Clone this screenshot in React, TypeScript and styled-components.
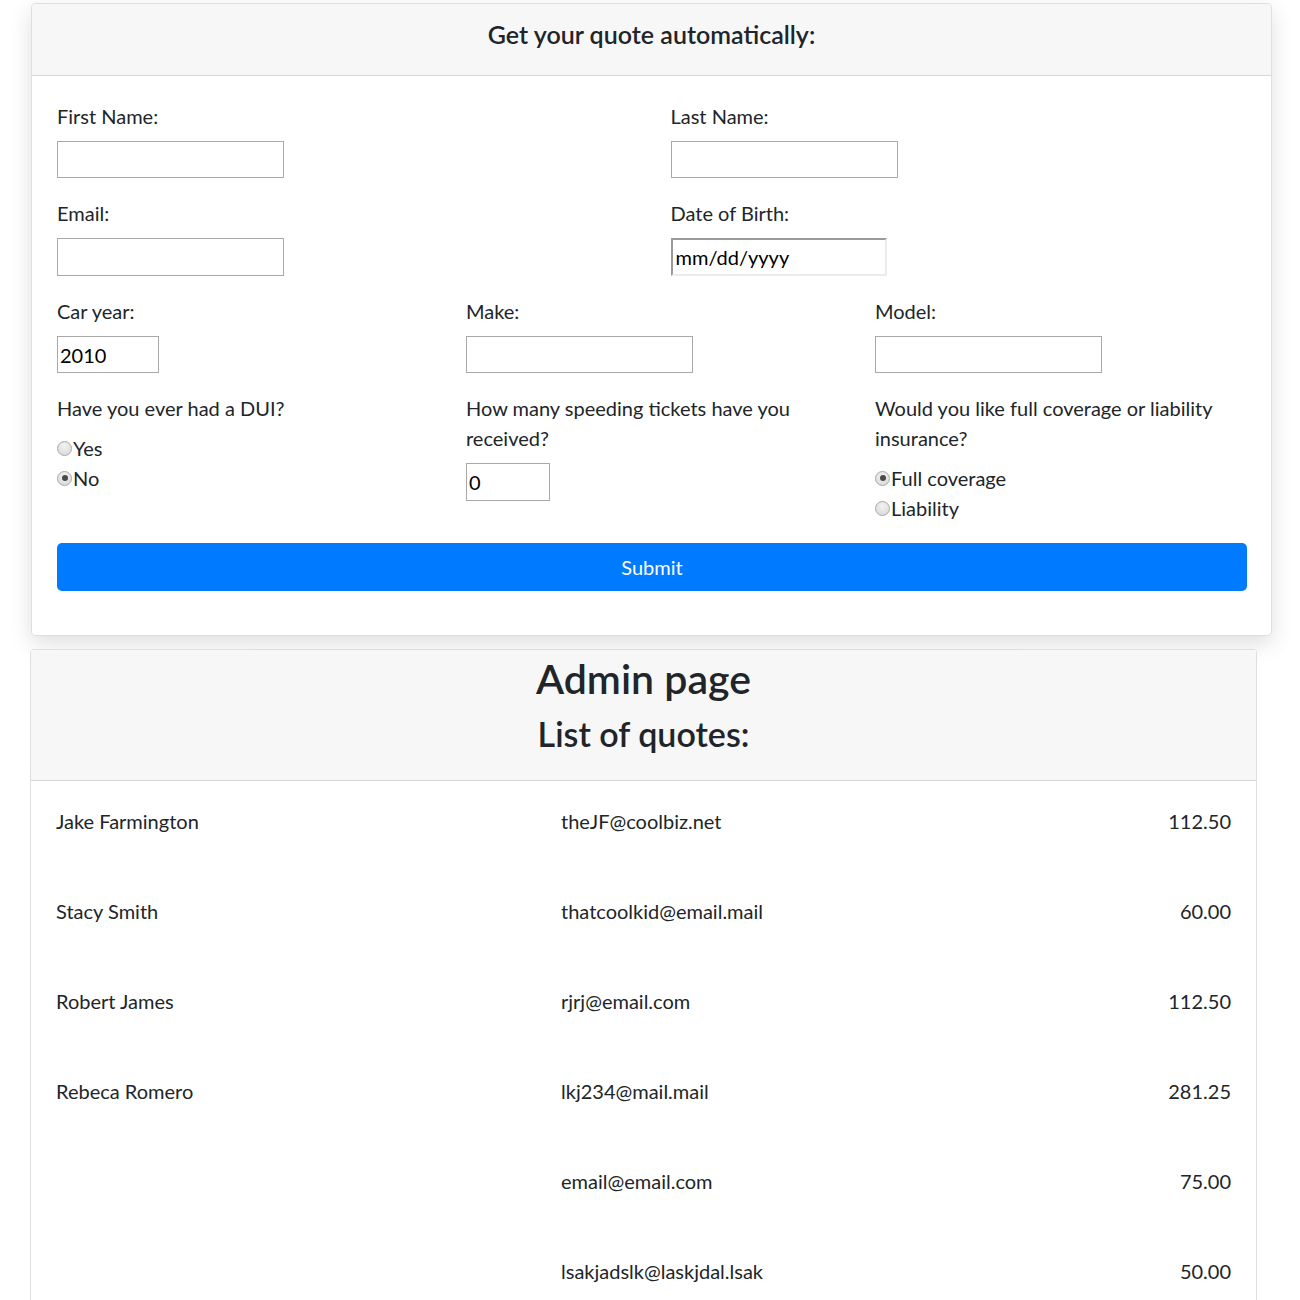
import React from "react";
import styled, { createGlobalStyle } from "styled-components";

const Global = createGlobalStyle`
  html, body { margin: 0; padding: 0; background: #ffffff; }
  body {
    font-family: "Lato", "Open Sans", sans-serif;
    color: #212529;
    font-size: 20px;
    line-height: 30px;
  }
  * { box-sizing: border-box; }
`;

const Page = styled.div`
  padding: 3px 0 0 30px;
  width: 1300px;
`;

const QuoteCard = styled.section`
  margin-left: 1px;
  width: 1241px;
  background: #fff;
  border: 1px solid rgba(0, 0, 0, 0.125);
  border-radius: 5px;
  box-shadow: 0 8px 22px rgba(0, 0, 0, 0.13);
  overflow: hidden;
`;

const QuoteHeader = styled.header`
  background: #f7f7f7;
  border-bottom: 1px solid rgba(0, 0, 0, 0.125);
  padding: 15px 0 26px;
  text-align: center;
  font-size: 25px;
  line-height: 30px;
  font-weight: 600;
  color: #212529;
`;

const QuoteBody = styled.form`
  padding: 25px 2px 44px 10px;
`;

const Row = styled.div<{ $cols: number }>`
  display: grid;
  grid-template-columns: repeat(${(p) => p.$cols}, 1fr);
`;

const Field = styled.div`
  padding: 0 15px;
  margin-bottom: 20px;
`;

const Label = styled.label`
  display: block;
  font-size: 20px;
  line-height: 30px;
  margin-bottom: 10px;
  color: #212529;
`;

const TextInput = styled.input<{ $w: number; $h?: number }>`
  display: block;
  width: ${(p) => p.$w}px;
  height: ${(p) => p.$h ?? 37}px;
  border: 1px solid #a9a9a9;
  border-radius: 0;
  padding: 0 2px;
  margin: 0;
  font-family: "Lato", "Open Sans", sans-serif;
  font-size: 20px;
  color: #000;
  background: #fff;
  outline: none;
`;

const DateInput = styled.input`
  display: block;
  width: 216px;
  height: 38px;
  border-style: solid;
  border-width: 2px;
  border-color: #9a9a9a #ececec #ececec #9a9a9a;
  border-radius: 0;
  padding: 0 3px;
  margin: 0;
  font-family: "Lato", "Open Sans", sans-serif;
  font-size: 20px;
  color: #000;
  background: #fff;
  outline: none;
`;

const RadioLine = styled.label`
  display: flex;
  align-items: center;
  height: 30px;
  font-size: 20px;
  color: #212529;
  cursor: pointer;
`;

const Radio = styled.input`
  appearance: none;
  -webkit-appearance: none;
  width: 15px;
  height: 15px;
  margin: 0 1px 0 0;
  border-radius: 50%;
  border: 1px solid #a8a8a8;
  background: radial-gradient(circle at 50% 30%, #f2f2f2 0%, #d6d6d6 100%);
  position: relative;
  flex: none;
  &:checked::after {
    content: "";
    position: absolute;
    left: 3.5px;
    top: 3.5px;
    width: 6px;
    height: 6px;
    border-radius: 50%;
    background: #4a4a4a;
  }
`;

const SubmitButton = styled.button`
  display: block;
  width: calc(100% - 37px);
  margin: 0 22px 0 15px;
  height: 48px;
  border: none;
  border-radius: 5px;
  background: #007bff;
  color: #fff;
  font-family: "Lato", "Open Sans", sans-serif;
  font-size: 20px;
  cursor: pointer;
`;

const AdminCard = styled.section`
  margin-top: 13px;
  width: 1227px;
  background: #fff;
  border: 1px solid rgba(0, 0, 0, 0.125);
  border-radius: 4px 4px 0 0;
  border-bottom: none;
`;

const AdminHeader = styled.header`
  background: #f7f7f7;
  border-bottom: 1px solid rgba(0, 0, 0, 0.125);
  padding: 5px 0 27px;
  text-align: center;
`;

const Title = styled.h1`
  margin: 0 0 12px;
  font-size: 41px;
  line-height: 48px;
  font-weight: 600;
  color: #212529;
`;

const Subtitle = styled.h2`
  margin: 0;
  font-size: 34px;
  line-height: 38px;
  font-weight: 600;
  color: #212529;
`;

const AdminBody = styled.div`
  padding: 25px 25px 30px;
`;

const QuoteRow = styled.div`
  display: grid;
  grid-template-columns: 505px 1fr auto;
  font-size: 20px;
  line-height: 30px;
  margin-bottom: 60px;
  color: #212529;
`;

const Amount = styled.span`
  text-align: right;
`;

const quotes = [
  { name: "Jake Farmington", email: "theJF@coolbiz.net", price: "112.50" },
  { name: "Stacy Smith", email: "thatcoolkid@email.mail", price: "60.00" },
  { name: "Robert James", email: "rjrj@email.com", price: "112.50" },
  { name: "Rebeca Romero", email: "lkj234@mail.mail", price: "281.25" },
  { name: "", email: "email@email.com", price: "75.00" },
  { name: "", email: "lsakjadslk@laskjdal.lsak", price: "50.00" },
];

export default function App() {
  return (
    <>
      <Global />
      <Page>
        <QuoteCard>
          <QuoteHeader>Get your quote automatically:</QuoteHeader>
          <QuoteBody onSubmit={(e) => e.preventDefault()}>
            <Row $cols={2}>
              <Field>
                <Label>First Name:</Label>
                <TextInput $w={227} type="text" />
              </Field>
              <Field>
                <Label>Last Name:</Label>
                <TextInput $w={227} type="text" />
              </Field>
            </Row>
            <Row $cols={2}>
              <Field>
                <Label>Email:</Label>
                <TextInput $w={227} $h={38} type="text" />
              </Field>
              <Field>
                <Label>Date of Birth:</Label>
                <DateInput type="text" defaultValue="mm/dd/yyyy" />
              </Field>
            </Row>
            <Row $cols={3}>
              <Field>
                <Label>Car year:</Label>
                <TextInput $w={102} type="text" defaultValue="2010" />
              </Field>
              <Field>
                <Label>Make:</Label>
                <TextInput $w={227} type="text" />
              </Field>
              <Field>
                <Label>Model:</Label>
                <TextInput $w={227} type="text" />
              </Field>
            </Row>
            <Row $cols={3}>
              <Field>
                <Label>Have you ever had a DUI?</Label>
                <RadioLine>
                  <Radio type="radio" name="dui" />
                  Yes
                </RadioLine>
                <RadioLine>
                  <Radio type="radio" name="dui" defaultChecked />
                  No
                </RadioLine>
              </Field>
              <Field>
                <Label>How many speeding tickets have you received?</Label>
                <TextInput $w={84} $h={38} type="text" defaultValue="0" />
              </Field>
              <Field>
                <Label>Would you like full coverage or liability insurance?</Label>
                <RadioLine>
                  <Radio type="radio" name="coverage" defaultChecked />
                  Full coverage
                </RadioLine>
                <RadioLine>
                  <Radio type="radio" name="coverage" />
                  Liability
                </RadioLine>
              </Field>
            </Row>
            <SubmitButton type="submit">Submit</SubmitButton>
          </QuoteBody>
        </QuoteCard>
        <AdminCard>
          <AdminHeader>
            <Title>Admin page</Title>
            <Subtitle>List of quotes:</Subtitle>
          </AdminHeader>
          <AdminBody>
            {quotes.map((q, i) => (
              <QuoteRow key={i}>
                <span>{q.name}</span>
                <span>{q.email}</span>
                <Amount>{q.price}</Amount>
              </QuoteRow>
            ))}
          </AdminBody>
        </AdminCard>
      </Page>
    </>
  );
}
